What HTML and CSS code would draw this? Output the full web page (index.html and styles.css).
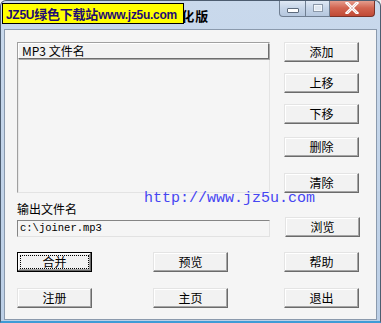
FILE: index.html
```html
<!DOCTYPE html>
<html>
<head>
<meta charset="utf-8">
<link rel="stylesheet" href="styles.css">
</head>
<body>
<div class="window">
  <div class="titlebar">
    <span class="app-icon"></span>
    <span class="title">MP3 Joiner 汉化版</span>
    <div class="caption-btns">
      <span class="cap cap-min"><i class="min-glyph"></i></span>
      <span class="cap cap-max"><i class="max-glyph"></i></span>
      <span class="cap cap-close">
        <svg width="16" height="12" viewBox="0 0 16 12"><path d="M3 1 L13 11 M13 1 L3 11" stroke="#fff" stroke-width="3" stroke-linecap="square"/><path d="M3 1 L13 11 M13 1 L3 11" stroke="#8a2a1e" stroke-width="1" opacity=".25"/></svg>
      </span>
    </div>
    <div class="stamp">JZ5U<span class="stamp-cjk">绿色下载站</span>www.jz5u.com</div>
  </div>
  <div class="client">
    <div class="top">
      <div class="listbox">
        <div class="list-header">MP3 文件名</div>
      </div>
      <div class="side">
        <button class="btn">添加</button>
        <button class="btn gap11">上移</button>
        <button class="btn gap11">下移</button>
        <button class="btn gap13">删除</button>
        <button class="btn gap16">清除</button>
      </div>
    </div>
    <div class="out-label">输出文件名</div>
    <div class="out-row">
      <div class="field">c:\joiner.mp3</div>
      <button class="btn browse">浏览</button>
    </div>
    <div class="grid">
      <button class="btn default"><span class="focus">合并</span></button>
      <button class="btn">预览</button>
      <button class="btn">帮助</button>
      <button class="btn">注册</button>
      <button class="btn">主页</button>
      <button class="btn">退出</button>
    </div>
    <div class="url-mark">http://www.jz5u.com</div>
  </div>
</div>
</body>
</html>
```

FILE: styles.css
```css
html, body {
  margin: 0;
  padding: 0;
  background: #f4f4f4;
}
.window {
  position: relative;
  width: 381px;
  height: 323px;
  box-sizing: border-box;
  display: flex;
  flex-direction: column;
  background: linear-gradient(#c9d9ec, #bccfe6);
  border: 1px solid #4d5d70;
  border-bottom: 2px solid #3f9bd6;
  border-radius: 6px 6px 0 0;
  overflow: hidden;
  font-family: "Noto Sans CJK SC", "Liberation Sans", sans-serif;
  font-size: 12px;
  color: #000;
}
.titlebar {
  position: relative;
  height: 28px;
  flex: none;
  display: flex;
  align-items: center;
}
.app-icon {
  width: 12px;
  height: 12px;
  margin-left: 6px;
}
.title {
  margin-left: 63px;
  font-weight: bold;
  font-size: 13px;
  white-space: nowrap;
  letter-spacing: 1px;
}
.caption-btns {
  position: absolute;
  top: -1px;
  right: 5px;
  display: flex;
  height: 18px;
}
.cap {
  display: flex;
  align-items: center;
  justify-content: center;
  height: 17px;
  box-sizing: border-box;
  border: 1px solid #707f92;
  border-top: none;
  background: linear-gradient(#e2ebf6, #c6d5e8 50%, #b5c7de);
}
.cap-min {
  width: 27px;
  border-radius: 0 0 0 4px;
}
.cap-max {
  width: 24px;
  border-left: none;
}
.cap-close {
  width: 45px;
  border-left: none;
  border-color: #7a3228;
  border-radius: 0 0 4px 0;
  background: linear-gradient(#e7a596, #d26450 50%, #c04a36);
}
.min-glyph {
  display: block;
  width: 10px;
  height: 3px;
  margin-top: 4px;
  background: #fff;
  border: 1px solid #5c6a7c;
  border-radius: 1px;
}
.max-glyph {
  display: block;
  width: 8px;
  height: 6px;
  border: 1px solid #8c99aa;
  background: #dfe7f1;
  box-shadow: inset 0 0 0 1px #f2f6fa;
}
.stamp {
  position: absolute;
  left: 1px;
  top: 2px;
  width: 182px;
  height: 21px;
  box-sizing: border-box;
  background: #ffff00;
  border: 1px solid #000;
  color: #1e0c74;
  font-family: "Liberation Sans", "Noto Sans CJK SC", sans-serif;
  font-weight: bold;
  font-size: 12px;
  line-height: 19px;
  padding-left: 3px;
  white-space: nowrap;
  letter-spacing: -0.3px;
  overflow: hidden;
}
.stamp-cjk {
  font-family: "Noto Sans CJK SC", sans-serif;
  font-size: 13px;
  letter-spacing: -0.2px;
}
.client {
  position: relative;
  flex: 1;
  margin: 0 3px 1px 3px;
  background: #f5f5f5;
  border: 1px solid #8b9aad;
  padding: 12px 0 0 12px;
}
.top {
  display: flex;
}
.listbox {
  width: 253px;
  height: 151px;
  box-sizing: border-box;
  border: 1px solid;
  border-color: #a0a0a0 #e3e3e3 #e3e3e3 #a0a0a0;
  box-shadow: inset 1px 1px 0 #e8e8e8;
}
.list-header {
  height: 16px;
  box-sizing: border-box;
  border: 1px solid;
  border-color: #fff #6d6d6d #6d6d6d #fff;
  box-shadow: 1px 1px 0 #a8a8a8;
  background: #f2f2f2;
  padding-left: 3px;
  line-height: 13px;
  font-size: 12px;
  width: 251px;
}
.side {
  display: flex;
  flex-direction: column;
  margin-left: 14px;
}
.btn {
  width: 75px;
  height: 20px;
  box-sizing: border-box;
  padding: 0;
  margin: 0;
  background: #f2f2f2;
  border: 1px solid;
  border-color: #e4e4e4 #6b6b6b #6b6b6b #e4e4e4;
  box-shadow: inset -1px -1px 0 #a5a5a5, inset 1px 1px 0 #fff;
  font-family: "Noto Sans CJK SC", "Liberation Sans", sans-serif;
  font-size: 12px;
  line-height: 16px;
  color: #000;
  display: flex;
  align-items: center;
  justify-content: center;
}
.gap11 { margin-top: 11px; }
.gap13 { margin-top: 13px; }
.gap16 { margin-top: 16px; }
.out-label {
  margin-top: 9px;
  height: 14px;
  line-height: 14px;
  font-size: 12px;
}
.out-row {
  display: flex;
  align-items: flex-end;
  margin-top: 1px;
}
.field {
  width: 253px;
  height: 17px;
  box-sizing: border-box;
  border: 1px solid;
  border-color: #858585 #e2e2e2 #e2e2e2 #858585;
  padding-left: 2px;
  font-family: "Liberation Mono", monospace;
  font-size: 10.5px;
  line-height: 15px;
}
.browse {
  margin-left: 15px;
}
.grid {
  display: grid;
  grid-template-columns: 136px 131px 75px;
  row-gap: 16px;
  margin-top: 15px;
}
.default {
  border: 1px solid #000;
  box-shadow: inset -1px -1px 0 #6b6b6b, inset 1px 1px 0 #fff, inset -2px -2px 0 #a5a5a5;
}
.focus {
  display: block;
  width: 67px;
  height: 12px;
  line-height: 12px;
  border: 1px dotted #000;
  text-align: center;
}
.url-mark {
  position: absolute;
  left: 139px;
  top: 160px;
  font-family: "Liberation Mono", monospace;
  font-size: 15px;
  color: #4646f2;
  white-space: nowrap;
}
```
